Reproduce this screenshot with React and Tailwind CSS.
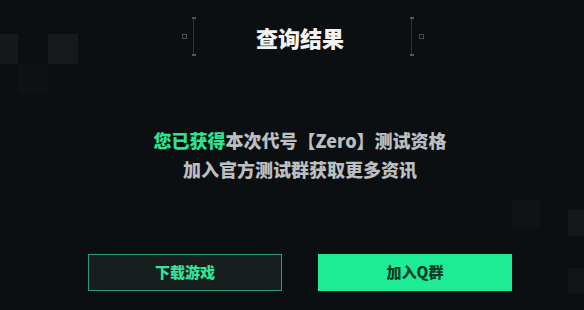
import React from "react";

const font = { fontFamily: '"Noto Sans CJK SC", "Noto Sans", sans-serif' };

function Bracket({ side }) {
  return (
    <div className={`flex items-center gap-[5px] ${side === "right" ? "flex-row-reverse" : ""}`}>
      <span className="h-[5px] w-[5px] border border-[#474c50]" />
      <div className="flex h-[39px] flex-col items-center justify-between">
        <span className="h-[2px] w-[4px] bg-[#50565a]" />
        <span className="w-px flex-1 bg-[#2f3438]" />
        <span className="h-[2px] w-[4px] bg-[#50565a]" />
      </div>
    </div>
  );
}

export default function App() {
  const tiles = [
    "left-0 top-[34px] h-[30px] w-[18px] bg-[#16181b]",
    "left-[48px] top-[34px] h-[30px] w-[30px] bg-[#17191c]",
    "left-[18px] top-[64px] h-[30px] w-[30px] bg-[#0f1215]",
    "left-[512px] top-[200px] h-[28px] w-[28px] bg-[#101316]",
    "left-[568px] top-[210px] h-[26px] w-[16px] bg-[#15181b]",
    "left-[568px] top-[268px] h-[26px] w-[16px] bg-[#121518]",
  ];

  return (
    <div className="relative h-[310px] w-[584px] overflow-hidden bg-[#0c0f12]" style={font}>
      {tiles.map((t) => (
        <div key={t} className={`absolute ${t}`} />
      ))}

      <div className="relative flex h-full flex-col items-center pl-[16px]">
        <div className="ml-[5px] mt-[17px] flex items-center">
          <Bracket side="left" />
          <h1 className="w-[214px] pr-[5px] text-center text-[22px] font-black leading-[36px] text-[#f2f2f2]">
            查询结果
          </h1>
          <Bracket side="right" />
        </div>

        <div className="mt-[70px] flex flex-col items-center text-[18px] font-black leading-[29px] text-[#bcbfc0]">
          <p>
            <span className="text-[#2fe394]">您已获得</span>本次代号【Zero】测试资格
          </p>
          <p>加入官方测试群获取更多资讯</p>
        </div>

        <div className="mt-[70px] flex gap-[36px]">
          <button className="flex h-[37px] w-[194px] items-center justify-center border border-[#2a9d74] bg-[#161e1e] text-[15px] font-black text-[#35e39a]">
            下载游戏
          </button>
          <button className="flex h-[37px] w-[194px] items-center justify-center bg-[#1dec95] text-[15px] font-black text-[#0e3a29]">
            加入Q群
          </button>
        </div>
      </div>
    </div>
  );
}
